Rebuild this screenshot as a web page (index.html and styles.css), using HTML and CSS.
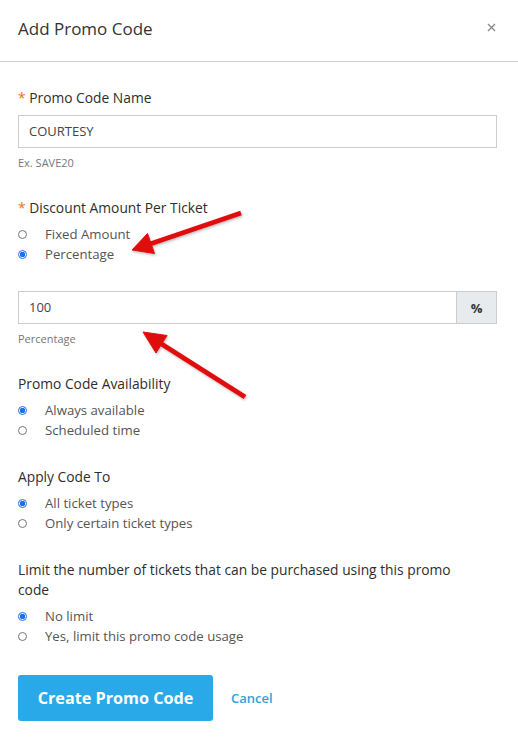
FILE: index.html
```html
<!DOCTYPE html>
<html>
<head>
<meta charset="utf-8">
<link rel="stylesheet" href="styles.css">
</head>
<body>
<div class="modal">
  <div class="modal-header">
    <h1 class="title">Add Promo Code</h1>
    <button class="close" aria-label="Close">
      <svg width="9" height="9" viewBox="0 0 9 9"><path d="M1 1L8 8M8 1L1 8" stroke="#8a8a8a" stroke-width="1.4"/></svg>
    </button>
  </div>
  <div class="modal-body">
    <div class="field first">
      <div class="label"><span class="req">*</span> Promo Code Name</div>
      <div class="input">COURTESY</div>
      <div class="help">Ex. SAVE20</div>
    </div>
    <div class="field">
      <div class="label"><span class="req">*</span> Discount Amount Per Ticket</div>
      <div class="radios">
        <div class="radio"><span class="dot"></span>Fixed Amount</div>
        <div class="radio"><span class="dot on"></span>Percentage</div>
      </div>
    </div>
    <div class="field">
      <div class="group">
        <div class="input grow">100</div>
        <div class="addon">%</div>
      </div>
      <div class="help">Percentage</div>
    </div>
    <div class="field">
      <div class="label">Promo Code Availability</div>
      <div class="radios">
        <div class="radio"><span class="dot on"></span>Always available</div>
        <div class="radio"><span class="dot"></span>Scheduled time</div>
      </div>
    </div>
    <div class="field">
      <div class="label">Apply Code To</div>
      <div class="radios">
        <div class="radio"><span class="dot on"></span>All ticket types</div>
        <div class="radio"><span class="dot"></span>Only certain ticket types</div>
      </div>
    </div>
    <div class="field">
      <div class="label">Limit the number of tickets that can be purchased using this promo code</div>
      <div class="radios">
        <div class="radio"><span class="dot on"></span>No limit</div>
        <div class="radio"><span class="dot"></span>Yes, limit this promo code usage</div>
      </div>
    </div>
    <div class="actions">
      <button class="btn-primary">Create Promo Code</button>
      <a class="cancel">Cancel</a>
    </div>
  </div>
  <svg class="annotations" width="518" height="745" viewBox="0 0 518 745">
    <defs>
      <filter id="sh" x="-20%" y="-20%" width="140%" height="140%">
        <feDropShadow dx="1" dy="1.5" stdDeviation="1.2" flood-color="#000" flood-opacity="0.25"/>
      </filter>
    </defs>
    <g filter="url(#sh)" fill="#e01010" stroke="#e01010">
      <line x1="241" y1="213" x2="150" y2="244" stroke-width="5"/>
      <polygon points="132,250 154.5,253.5 147.5,233.5" stroke-width="1" stroke-linejoin="round"/>
      <line x1="245" y1="397" x2="160" y2="343" stroke-width="5"/>
      <polygon points="143,332 167,335.5 156,353" stroke-width="1" stroke-linejoin="round"/>
    </g>
  </svg>
</div>
</body>
</html>
```

FILE: styles.css
```css
* { box-sizing: border-box; }
html, body { margin: 0; padding: 0; background: #fff; }
body {
  font-family: "Open Sans", "Liberation Sans", sans-serif;
  color: #333;
  width: 518px;
  height: 745px;
  overflow: hidden;
}
.modal { position: relative; width: 518px; height: 745px; }
.modal-header {
  display: flex;
  align-items: flex-start;
  justify-content: space-between;
  height: 62px;
  padding: 17px 20px 0 18px;
  border-bottom: 1px solid #cfcfcf;
}
.title {
  margin: 0;
  font-size: 17px;
  line-height: 24px;
  font-weight: 400;
  color: #333;
}
.close {
  border: 0;
  background: none;
  padding: 0;
  margin-top: 3px;
  width: 14px;
  height: 14px;
  display: flex;
  align-items: center;
  justify-content: center;
}
.modal-body { padding: 0 21px 0 18px; }
.field { margin-top: 27px; }
.field.first { margin-top: 26px; }
.label {
  max-width: 460px;
  font-size: 13.8px;
  line-height: 20px;
  font-weight: 400;
  color: #2e2e2e;
}
.req { color: #e8732a; }
.input {
  margin-top: 7px;
  height: 33px;
  border: 1px solid #cdcdcd;
  padding: 0 10px;
  font-size: 13px;
  line-height: 31px;
  color: #444;
}
.group { display: flex; height: 33px; }
.group .input { margin-top: 0; height: 33px; flex: 1; }
.addon {
  width: 40px;
  border: 1px solid #cdcdcd;
  border-left: 0;
  background: #e8ebee;
  display: flex;
  align-items: center;
  justify-content: center;
  font-size: 13px;
  font-weight: 700;
  color: #333;
}
.help {
  margin-top: 7px;
  font-size: 11px;
  line-height: 16px;
  color: #777;
}
.radios { margin-top: 6px; }
.radio {
  display: flex;
  align-items: center;
  height: 20px;
  font-size: 13.2px;
  color: #555;
}
.dot {
  width: 9px;
  height: 9px;
  border-radius: 50%;
  border: 1px solid #767676;
  margin: 0 18px 0 0;
  flex: none;
  background: #fff;
}
.dot.on {
  border: 1px solid #1a73e8;
  background: radial-gradient(circle, #1a73e8 0 2.6px, #fff 3px);
}
.actions {
  margin-top: 29px;
  display: flex;
  align-items: center;
}
.btn-primary {
  height: 46px;
  width: 195px;
  border: 0;
  border-radius: 3px;
  background: #29a9e7;
  color: #fff;
  font-family: "Open Sans", "Liberation Sans", sans-serif;
  font-size: 16.2px;
  font-weight: 700;
}
.cancel {
  margin-left: 18px;
  font-size: 13px;
  font-weight: 600;
  color: #2ea2dc;
}
.annotations { position: absolute; left: 0; top: 0; pointer-events: none; }
```
